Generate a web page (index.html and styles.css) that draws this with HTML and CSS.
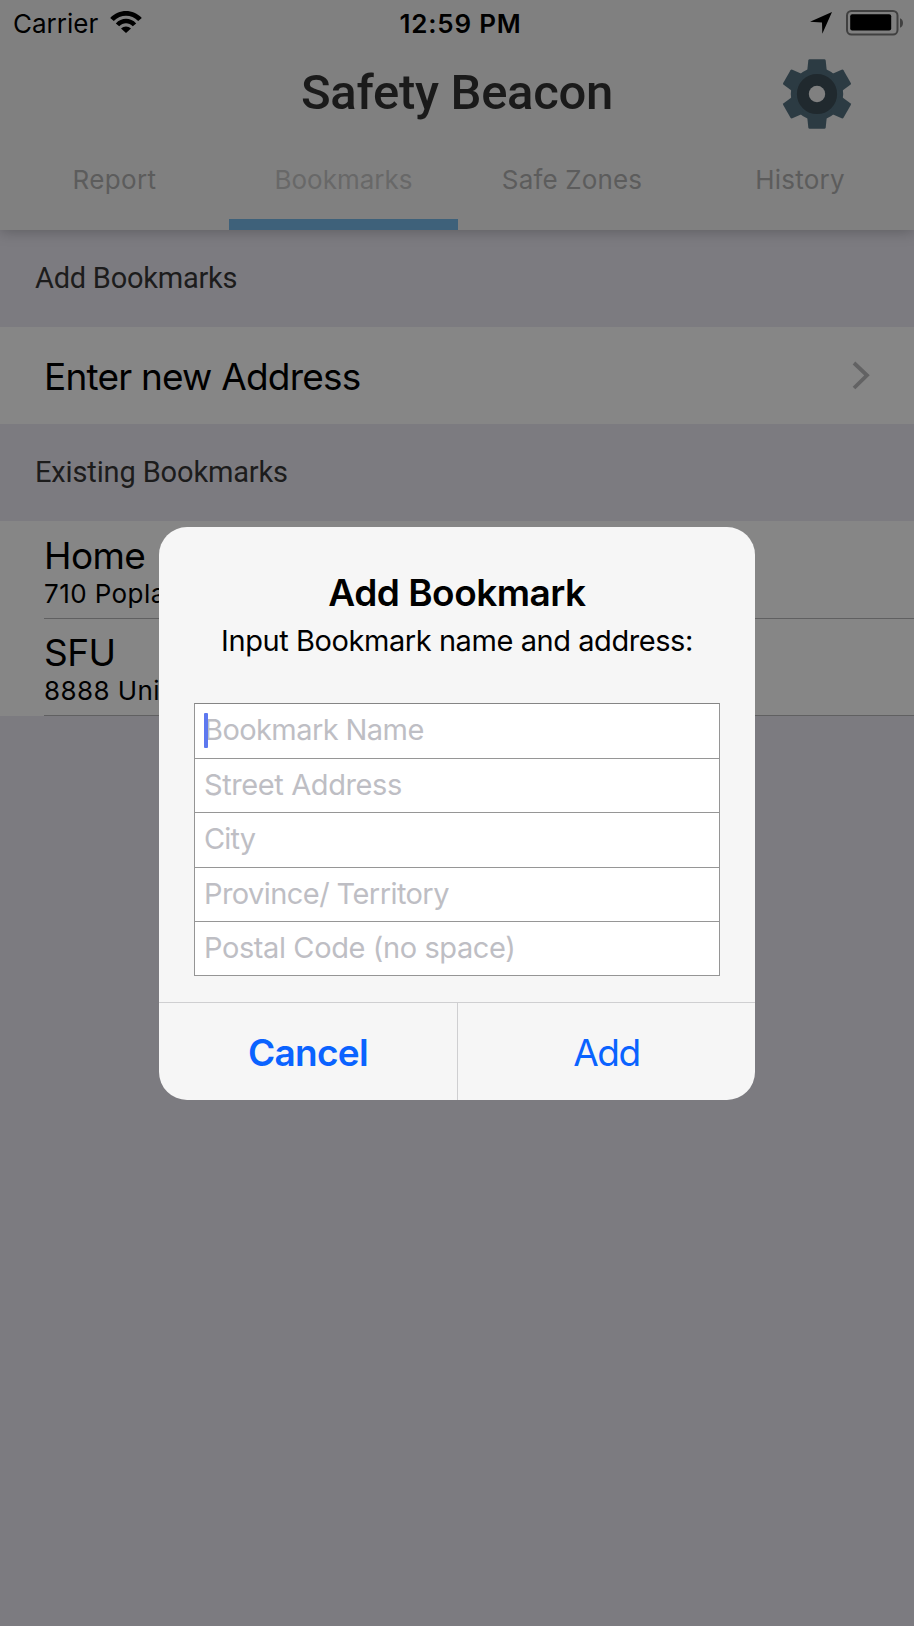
FILE: index.html
```html
<!DOCTYPE html>
<html lang="en">
<head>
<meta charset="utf-8">
<title>Safety Beacon</title>
<link rel="stylesheet" href="styles.css">
</head>
<body>
<div class="screen">
  <header class="header">
    <div class="status">
      <div class="status-left">
        <span class="carrier">Carrier</span>
        <svg class="wifi" width="32" height="22" viewBox="0 0 32 22">
          <path d="M0.2 6.9 C8.9 -2.3 23.1 -2.3 31.8 6.9 L28.2 10 C21.5 3 10.5 3 3.8 10 Z"/>
          <path d="M5.8 12.4 C11.4 6.3 20.6 6.3 26.2 12.4 L22.8 15.2 C19 11.3 13 11.3 9.2 15.2 Z"/>
          <path d="M11 17.4 C13.8 14.7 18.2 14.7 21 17.4 L16 22 Z"/>
        </svg>
      </div>
      <span class="clock">12:59 PM</span>
      <div class="status-right">
        <svg class="location" width="22" height="22" viewBox="0 0 22 22"><path d="M22 0 L12.3 21.8 L12 10.4 L0 9.8 Z"/></svg>
        <svg class="battery" width="58" height="26" viewBox="0 0 58 26">
          <rect x="1" y="1" width="50.5" height="23.6" rx="4.5" fill="none" stroke="#404040" stroke-width="2"/>
          <rect x="4.2" y="4.2" width="41" height="16.4" rx="2"/>
          <path d="M54 8.2 C58 9.5 58 16.5 54 17.8 Z" fill="#404040"/>
        </svg>
      </div>
    </div>
    <div class="titlebar">
      <h1 class="title">Safety Beacon</h1>
      <svg class="gear" width="70" height="72" viewBox="-35 -36 70 72">
        <g fill="#2c3b43">
          <circle r="26.2"/>
          <path id="tooth" d="M-10 -21 L-8.7 -33.5 Q-8.5 -34.8 -7.3 -34.8 H7.3 Q8.5 -34.8 8.7 -33.5 L10 -21 Z"/>
          <use href="#tooth" transform="rotate(60)"/>
          <use href="#tooth" transform="rotate(120)"/>
          <use href="#tooth" transform="rotate(180)"/>
          <use href="#tooth" transform="rotate(240)"/>
          <use href="#tooth" transform="rotate(300)"/>
        </g>
        <circle r="14.1" fill="none" stroke="#20292e" stroke-width="12"/>
        <circle r="8.2" fill="#808080"/>
      </svg>
    </div>
    <nav class="tabs">
      <span class="tab report">Report</span>
      <span class="tab active">Bookmarks</span>
      <span class="tab zones">Safe Zones</span>
      <span class="tab history">History</span>
    </nav>
  </header>
  <main class="list">
    <h2 class="section add">Add Bookmarks</h2>
    <div class="entry">
      <span class="entry-label">Enter new Address</span>
      <svg class="chevron" width="20" height="30" viewBox="0 0 20 30"><path d="M2 2 L15 14.3 L2 27" fill="none" stroke="#626263" stroke-width="3.8"/></svg>
    </div>
    <h2 class="section existing">Existing Bookmarks</h2>
    <div class="bookmark first"><span class="name">Home</span><span class="address">710 Popla</span></div>
    <div class="bookmark"><span class="name">SFU</span><span class="address">8888 Uni</span></div>
  </main>
</div>
<div class="overlay">
  <section class="dialog">
    <h3 class="dialog-title">Add Bookmark</h3>
    <p class="dialog-text">Input Bookmark name and address:</p>
    <div class="fields">
      <div class="field bookmark-name"><i class="caret"></i><span>Bookmark Name</span></div>
      <div class="field street"><span>Street Address</span></div>
      <div class="field city"><span>City</span></div>
      <div class="field province"><span>Province/ Territory</span></div>
      <div class="field postal"><span>Postal Code (no space)</span></div>
    </div>
    <div class="actions">
      <span class="action cancel">Cancel</span>
      <span class="action confirm">Add</span>
    </div>
  </section>
</div>
</body>
</html>
```
FILE: styles.css
```css
* { box-sizing: border-box; }
body { margin: 0; background: #7c7b80; font-family: Inter, "Liberation Sans", sans-serif; color: #000; }
h1, h2, h3, p { margin: 0; font-weight: 400; }
svg { display: block; flex: none; }

.screen { width: 914px; height: 1626px; white-space: nowrap; overflow: hidden; }

/* Header */
.header { position: relative; height: 230px; background: #808080; box-shadow: 0 1px 14px rgba(0, 0, 0, .26); }
.status { display: grid; grid-template-columns: 1fr auto 1fr; height: 46px; padding: 0 10px 0 13px; font-size: 26px; line-height: 48px; }
.status-left { display: flex; gap: 12px; }
.wifi { margin-top: 11px; }
.clock { margin-left: 4px; font-weight: 600; letter-spacing: .75px; }
.status-right { display: flex; justify-content: flex-end; gap: 14px; }
.location { margin-top: 12px; }
.battery { margin-top: 10px; }
.titlebar { display: grid; grid-template-columns: 1fr auto 1fr; height: 92px; }
.title { grid-column: 2; font: 500 49px/94px Roboto, sans-serif; letter-spacing: -.29px; color: #1a1a1a; }
.gear { justify-self: end; margin: 12px 62px 0 0; }
.tabs { display: grid; grid-template-columns: 229px 229px 228px 228px; height: 92px; }
.tab { height: 92px; border-bottom: 11px solid transparent; font-size: 26px; line-height: 84px; text-align: center; color: #5c5c5c; }
.tab.active { border-color: #3e617a; color: #686868; }
.report { letter-spacing: .35px; }
.zones { letter-spacing: .15px; }
.history { letter-spacing: .25px; }

/* List */
.section { height: 97px; padding-left: 35px; font: 400 29px/97px Roboto, sans-serif; color: #1c1c1c; }
.section.add { letter-spacing: -.24px; }
.section.existing { letter-spacing: -.14px; }
.entry { display: flex; justify-content: space-between; height: 97px; padding: 1px 42px 0 44px; background: #868686; font-size: 37px; line-height: 97px; letter-spacing: -.8px; }
.chevron { margin-top: 33px; }
.bookmark { display: flex; flex-direction: column; height: 97px; padding: 11px 0 0 44px; background: linear-gradient(#606061, #606061) 44px 100% / 100% 1px no-repeat #868686; }
.bookmark.first { height: 98px; padding-top: 12px; }
.name { font-size: 37px; line-height: 45px; letter-spacing: -.6px; }
.address { font-size: 26px; line-height: 32px; letter-spacing: .42px; }

/* Dialog */
.overlay { position: absolute; inset: 0; padding: 527px 0 0 159px; }
.dialog { width: 596px; height: 573px; border-radius: 28px; background: #f6f6f6; overflow: hidden; text-align: center; white-space: nowrap; }
.dialog-title { padding-top: 41px; font-size: 37px; font-weight: 600; line-height: 49px; letter-spacing: -.5px; }
.dialog-text { height: 46px; font-size: 29px; line-height: 48px; letter-spacing: -.43px; }
.fields { height: 273px; margin: 40px 35px 26px; border: 1px solid #959595; border-top-color: #858585; background: #fff; }
.field { display: flex; height: 54.5px; padding-left: 9px; border-bottom: 1px solid #969696; font-size: 29px; line-height: 52px; color: #bebec4; }
.field:last-child { border: 0; }
.bookmark-name { letter-spacing: -.58px; }
.street { letter-spacing: -.4px; }
.city { letter-spacing: -.85px; }
.province { letter-spacing: -.57px; }
.postal { letter-spacing: -.4px; }
.caret { width: 4px; height: 35px; margin: 9px -4px 0 0; border-radius: 1px; background: #5d78ef; z-index: 1; }
.actions { display: grid; grid-template-columns: 299px 297px; height: 98px; border-top: 1px solid #cfcfd1; }
.action { font-size: 37px; line-height: 100px; color: #0a63ff; }
.cancel { border-right: 1px solid #cfcfd1; font-weight: 600; letter-spacing: -.75px; }
.confirm { letter-spacing: -1.4px; }
```
